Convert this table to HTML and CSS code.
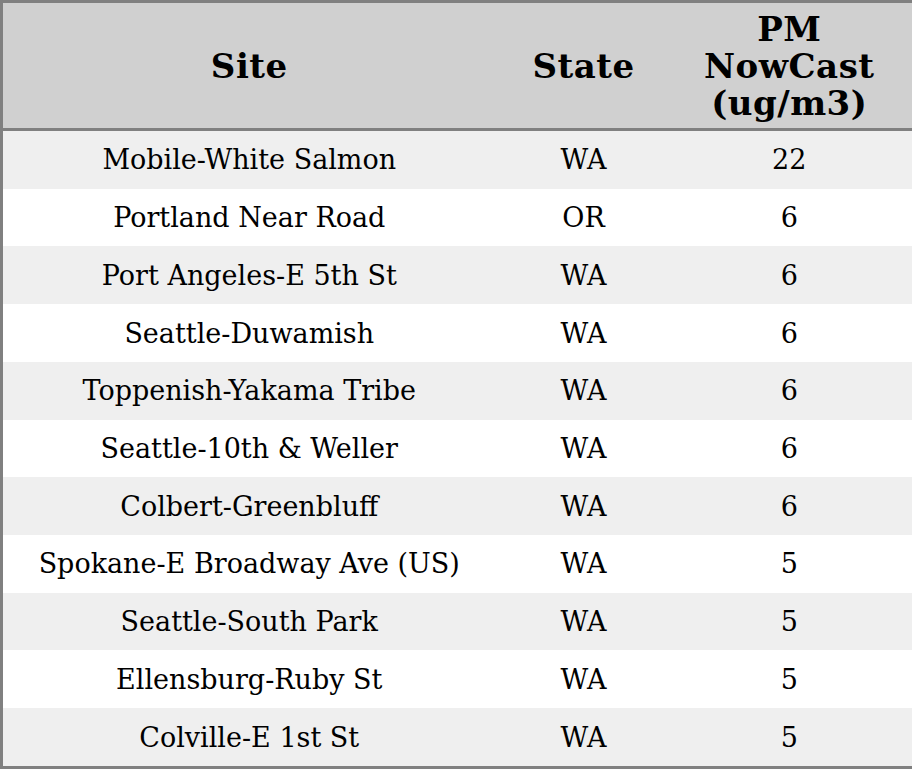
FILE: index.html
```html
<!DOCTYPE html>
<html>
<head>
<meta charset="utf-8">
<link rel="stylesheet" href="styles.css">
</head>
<body>
<table class="aq">
  <colgroup>
    <col class="c-site">
    <col class="c-state">
    <col class="c-pm">
  </colgroup>
  <thead>
    <tr><th>Site</th><th>State</th><th class="pm">PM<br>NowCast<br>(ug/m3)</th></tr>
  </thead>
  <tbody>
    <tr><td>Mobile-White Salmon</td><td>WA</td><td class="pm">22</td></tr>
    <tr><td>Portland Near Road</td><td>OR</td><td class="pm">6</td></tr>
    <tr><td>Port Angeles-E 5th St</td><td>WA</td><td class="pm">6</td></tr>
    <tr><td>Seattle-Duwamish</td><td>WA</td><td class="pm">6</td></tr>
    <tr><td>Toppenish-Yakama Tribe</td><td>WA</td><td class="pm">6</td></tr>
    <tr><td>Seattle-10th &amp; Weller</td><td>WA</td><td class="pm">6</td></tr>
    <tr><td>Colbert-Greenbluff</td><td>WA</td><td class="pm">6</td></tr>
    <tr><td>Spokane-E Broadway Ave (US)</td><td>WA</td><td class="pm">5</td></tr>
    <tr><td>Seattle-South Park</td><td>WA</td><td class="pm">5</td></tr>
    <tr><td>Ellensburg-Ruby St</td><td>WA</td><td class="pm">5</td></tr>
    <tr><td>Colville-E 1st St</td><td>WA</td><td class="pm">5</td></tr>
  </tbody>
</table>
</body>
</html>
```
FILE: styles.css
```css
html, body {
  margin: 0;
  padding: 0;
  background: #ffffff;
}
.aq {
  width: 912px;
  height: 769px;
  border-collapse: collapse;
  table-layout: fixed;
  border: 3px solid #808080;
  font-family: "DejaVu Serif", serif;
  color: #000;
}
.c-site { width: 494px; }
.c-state { width: 176px; }
.c-pm { width: 242px; }
.aq thead tr {
  background: #d0d0d0;
  border-bottom: 3px solid #808080;
  height: 128px;
}
.aq th {
  font-size: 34px;
  font-weight: bold;
  line-height: 37px;
  letter-spacing: 0.5px;
  text-align: center;
  padding: 2px 0 0 0;
}
.aq td {
  font-size: 27px;
  text-align: center;
  padding: 0;
  height: 57px;
}
.aq .pm { padding-right: 5px; }
.aq tbody tr:nth-child(odd) { background: #efefef; }
.aq tbody tr:nth-child(even) { background: #ffffff; }
```
